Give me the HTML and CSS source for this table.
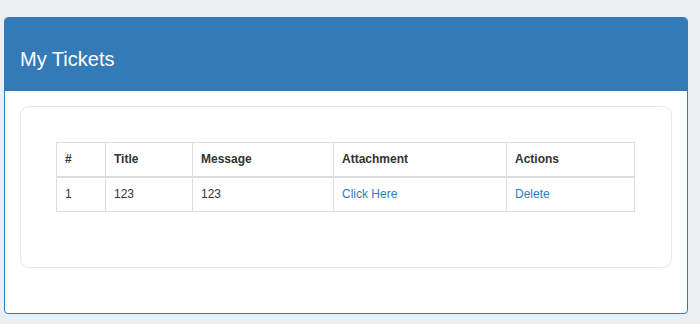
FILE: index.html
```html
<!DOCTYPE html>
<html lang="en">
<head>
<meta charset="utf-8">
<title>My Tickets</title>
<link rel="stylesheet" href="styles.css">
</head>
<body>
  <div class="panel">
    <div class="panel-heading">
      <h3 class="panel-title">My Tickets</h3>
    </div>
    <div class="panel-body">
      <div class="card">
        <table class="table">
          <thead>
            <tr>
              <th class="c-num">#</th>
              <th class="c-title">Title</th>
              <th class="c-msg">Message</th>
              <th class="c-att">Attachment</th>
              <th class="c-act">Actions</th>
            </tr>
          </thead>
          <tbody>
            <tr>
              <td>1</td>
              <td>123</td>
              <td>123</td>
              <td><a href="#">Click Here</a></td>
              <td><a href="#">Delete</a></td>
            </tr>
          </tbody>
        </table>
      </div>
    </div>
  </div>
</body>
</html>
```

FILE: styles.css
```css
* { box-sizing: border-box; }

html, body {
  margin: 0;
  padding: 0;
}

body {
  background: #edeff2;
  font-family: "Liberation Sans", Arial, Helvetica, sans-serif;
  font-size: 12px;
  line-height: 1.42857;
  color: #333;
  padding: 17px 12px 0 4px;
}

.panel {
  background: #fff;
  border: 1px solid #337ab7;
  border-radius: 4px;
}

.panel-heading {
  background: #337ab7;
  color: #fff;
  padding: 30px 15px 21px;
  border-radius: 3px 3px 0 0;
}

.panel-title {
  margin: 0;
  font-size: 20px;
  font-weight: normal;
  line-height: 22px;
}

.panel-body {
  padding: 15px;
}

.card {
  border: 1px solid #e8e8e8;
  border-radius: 9px;
  padding: 35px 36px 35px 35px;
  margin-bottom: 30px;
}

.table {
  width: 100%;
  border-collapse: collapse;
  border: 1px solid #ddd;
  margin-bottom: 20px;
}

.table th,
.table td {
  border: 1px solid #ddd;
  padding: 8px;
  text-align: left;
  vertical-align: top;
}

.table th {
  font-weight: bold;
  border-bottom-width: 2px;
}

.c-num { width: 49px; }
.c-title { width: 87px; }
.c-msg { width: 141px; }
.c-att { width: 173px; }

a {
  color: #337ab7;
  text-decoration: none;
}
```
